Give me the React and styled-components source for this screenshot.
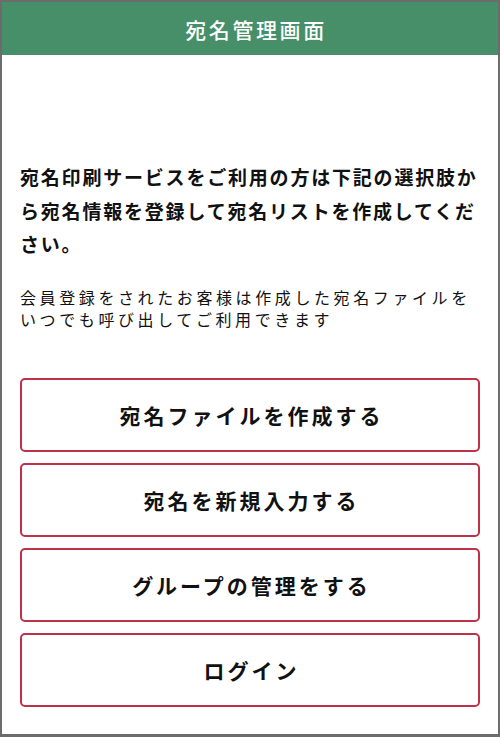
import styled, { createGlobalStyle } from 'styled-components';

const GlobalStyle = createGlobalStyle`
  html, body {
    margin: 0;
    padding: 0;
    background: #ffffff;
  }
  body {
    font-family: "Noto Sans CJK JP", "Noto Sans", sans-serif;
    color: #111111;
  }
  * {
    box-sizing: border-box;
  }
`;

const Frame = styled.div`
  display: flex;
  flex-direction: column;
  width: 500px;
  height: 737px;
  border: 2px solid #6c6c6c;
  border-bottom-width: 3px;
  background: #ffffff;
  overflow: hidden;
`;

const Header = styled.header`
  display: flex;
  align-items: center;
  justify-content: center;
  height: 53px;
  padding-left: 12px;
  background: #468f69;
  color: #ffffff;
  font-size: 21px;
  font-weight: 500;
  letter-spacing: 2.6px;
`;

const Content = styled.main`
  display: flex;
  flex-direction: column;
  padding: 105px 18px 0;
`;

const Lead = styled.p`
  margin: 0;
  font-size: 19px;
  font-weight: 700;
  line-height: 33.5px;
  letter-spacing: 1.8px;
`;

const Note = styled.p`
  margin: 25px 0 0;
  font-size: 16px;
  font-weight: 400;
  line-height: 22px;
  letter-spacing: 3.6px;
`;

const ButtonList = styled.nav`
  display: flex;
  flex-direction: column;
  gap: 11px;
  margin-top: 48px;
`;

const MenuButton = styled.button`
  display: flex;
  align-items: center;
  justify-content: center;
  height: 74px;
  padding: 0 0 0 3px;
  border: 2px solid #bf3149;
  border-radius: 5px;
  background: #ffffff;
  color: #111111;
  font-family: inherit;
  font-size: 21px;
  font-weight: 700;
  letter-spacing: 3px;
  cursor: pointer;
`;

const menu = [
  '宛名ファイルを作成する',
  '宛名を新規入力する',
  'グループの管理をする',
  'ログイン',
];

const App = () => {
  return (
    <>
      <GlobalStyle />
      <Frame>
        <Header>宛名管理画面</Header>
        <Content>
          <Lead>
            宛名印刷サービスをご利用の方は下記の選択肢から宛名情報を登録して宛名リストを作成してください。
          </Lead>
          <Note>
            会員登録をされたお客様は作成した宛名ファイルを
            <br />
            いつでも呼び出してご利用できます
          </Note>
          <ButtonList>
            {menu.map((label) => (
              <MenuButton key={label}>{label}</MenuButton>
            ))}
          </ButtonList>
        </Content>
      </Frame>
    </>
  );
};

export default App;
